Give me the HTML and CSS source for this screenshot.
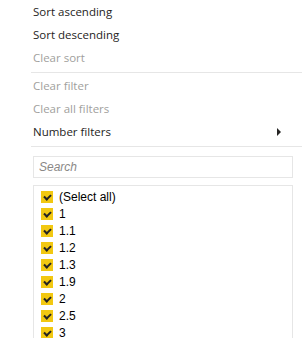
FILE: index.html
```html
<!DOCTYPE html>
<html lang="en">

<head>
    <meta charset="UTF-8">
    <meta name="viewport" content="width=device-width, initial-scale=1.0">
    <title>Filter menu</title>
    <link rel="stylesheet" href="styles.css">
</head>

<body>
    <div class="filter-menu">
        <ul class="menu-list">
            <li class="menu-item">Sort ascending</li>
            <li class="menu-item">Sort descending</li>
            <li class="menu-item disabled">Clear sort</li>
        </ul>
        <div class="separator"></div>
        <ul class="menu-list">
            <li class="menu-item disabled">Clear filter</li>
            <li class="menu-item disabled">Clear all filters</li>
            <li class="menu-item has-sub">Number filters <span class="sub-arrow"></span></li>
        </ul>
        <div class="separator"></div>

        <div class="filter-body">
            <input type="text" class="search-box" placeholder="Search">

            <ul class="value-list">
                <li class="value-item"><span class="check"></span>(Select all)</li>
                <li class="value-item"><span class="check"></span>1</li>
                <li class="value-item"><span class="check"></span>1.1</li>
                <li class="value-item"><span class="check"></span>1.2</li>
                <li class="value-item"><span class="check"></span>1.3</li>
                <li class="value-item"><span class="check"></span>1.9</li>
                <li class="value-item"><span class="check"></span>2</li>
                <li class="value-item"><span class="check"></span>2.5</li>
                <li class="value-item"><span class="check"></span>3</li>
            </ul>
        </div>
    </div>
</body>

</html>
```

FILE: styles.css
```css
body {
    margin: 0;
    background-color: #fff;
    overflow: hidden;
}

.filter-menu {
    margin-left: 31px;
    width: 271px;
    height: 338px;
    overflow: hidden;
    font-family: 'Open Sans', 'Noto Sans', sans-serif;
    font-size: 11.5px;
    color: #252423;
}

.menu-list {
    list-style-type: none;
    margin: 0;
    padding: 0;
}

.menu-item {
    height: 23px;
    line-height: 23px;
    padding-left: 2px;
    display: flex;
    align-items: center;
    justify-content: space-between;
}

.menu-item.disabled {
    color: #a19f9d;
}

.sub-arrow {
    width: 0;
    height: 0;
    margin-right: 21px;
    border-top: 4px solid transparent;
    border-bottom: 4px solid transparent;
    border-left: 4px solid #252423;
}

.separator {
    height: 1px;
    margin: 3px 0 1px;
    background-color: #e6e6e6;
}

.filter-body {
    padding: 8px 9px 0 2px;
}

.search-box {
    display: block;
    box-sizing: border-box;
    width: 100%;
    height: 22px;
    margin: 0;
    padding: 0 5px;
    border: 1px solid #e6e6e6;
    font-family: 'Liberation Sans', Arial, sans-serif;
    font-size: 12px;
    outline: none;
}

.search-box::placeholder {
    color: #8a8886;
    font-style: italic;
}

.value-list {
    list-style-type: none;
    margin: 7px 0 0;
    padding: 2px 0 20px 7px;
    border: 1px solid #e6e6e6;
    font-family: 'Liberation Sans', Arial, sans-serif;
    font-size: 12px;
    color: #000;
}

.value-item {
    height: 17px;
    display: flex;
    align-items: center;
}

.check {
    width: 12px;
    height: 12px;
    margin-right: 6px;
    background-color: #f2c811;
    position: relative;
}

/* check mark drawn with two borders */
.check::after {
    content: "";
    position: absolute;
    left: 3px;
    top: 2px;
    width: 5px;
    height: 3px;
    border-left: 2px solid #252423;
    border-bottom: 2px solid #252423;
    transform: translate(0, 1px) rotate(-45deg);
}
```
